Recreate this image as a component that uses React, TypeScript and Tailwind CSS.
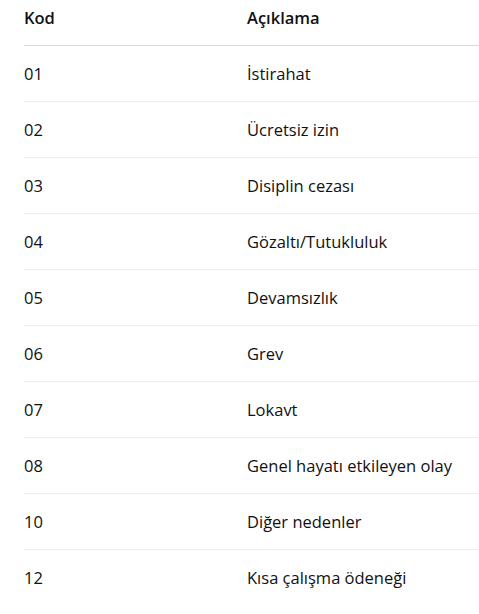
const rows = [
  { code: "01", label: "İstirahat" },
  { code: "02", label: "Ücretsiz izin" },
  { code: "03", label: "Disiplin cezası" },
  { code: "04", label: "Gözaltı/Tutukluluk" },
  { code: "05", label: "Devamsızlık" },
  { code: "06", label: "Grev" },
  { code: "07", label: "Lokavt" },
  { code: "08", label: "Genel hayatı etkileyen olay" },
  { code: "10", label: "Diğer nedenler" },
  { code: "12", label: "Kısa çalışma ödeneği" },
];

export default function App() {
  return (
    <div className="bg-white pl-6 min-h-[614px] font-['Open_Sans',sans-serif] text-[#111111]">
      <table className="w-full border-collapse text-left text-[16.5px] leading-6">
        <thead>
          <tr className="border-b border-[#d9d9d9]">
            <th className="w-[223px] pt-[6px] pb-[15px] font-semibold">Kod</th>
            <th className="pt-[6px] pb-[15px] font-semibold">Açıklama</th>
          </tr>
        </thead>
        <tbody>
          {rows.map((row, i) => (
            <tr
              key={row.code}
              className={i < rows.length - 1 ? "border-b border-[#eeeeee]" : ""}
            >
              <td className="h-[56px] align-middle">{row.code}</td>
              <td className="h-[56px] align-middle">{row.label}</td>
            </tr>
          ))}
        </tbody>
      </table>
    </div>
  );
}
